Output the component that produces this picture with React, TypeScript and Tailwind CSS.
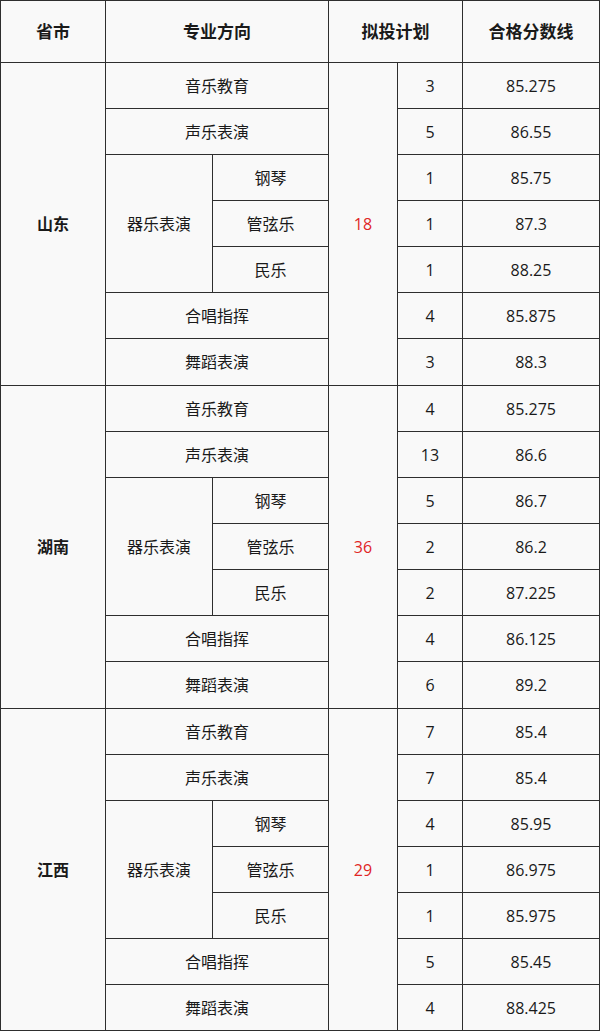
import React from "react";

type Block = {
  prov: string;
  plan: string;
  counts: string[];
  scores: string[];
};

const blocks: Block[] = [
  {
    prov: "山东",
    plan: "18",
    counts: ["3", "5", "1", "1", "1", "4", "3"],
    scores: ["85.275", "86.55", "85.75", "87.3", "88.25", "85.875", "88.3"],
  },
  {
    prov: "湖南",
    plan: "36",
    counts: ["4", "13", "5", "2", "2", "4", "6"],
    scores: ["85.275", "86.6", "86.7", "86.2", "87.225", "86.125", "89.2"],
  },
  {
    prov: "江西",
    plan: "29",
    counts: ["7", "7", "4", "1", "1", "5", "4"],
    scores: ["85.4", "85.4", "85.95", "86.975", "85.975", "85.45", "88.425"],
  },
];

const cell = "bg-[#f9f9f9] flex items-center justify-center";

function BlockCells({ b }: { b: Block }) {
  return (
    <>
      {/* row 1 */}
      <div className={`${cell} row-span-7 font-bold`}>{b.prov}</div>
      <div className={`${cell} col-span-2`}>音乐教育</div>
      <div className={`${cell} row-span-7 text-[#e02525]`}>{b.plan}</div>
      <div className={cell}>{b.counts[0]}</div>
      <div className={cell}>{b.scores[0]}</div>
      {/* row 2 */}
      <div className={`${cell} col-span-2`}>声乐表演</div>
      <div className={cell}>{b.counts[1]}</div>
      <div className={cell}>{b.scores[1]}</div>
      {/* row 3 */}
      <div className={`${cell} row-span-3`}>器乐表演</div>
      <div className={cell}>钢琴</div>
      <div className={cell}>{b.counts[2]}</div>
      <div className={cell}>{b.scores[2]}</div>
      {/* row 4 */}
      <div className={cell}>管弦乐</div>
      <div className={cell}>{b.counts[3]}</div>
      <div className={cell}>{b.scores[3]}</div>
      {/* row 5 */}
      <div className={cell}>民乐</div>
      <div className={cell}>{b.counts[4]}</div>
      <div className={cell}>{b.scores[4]}</div>
      {/* row 6 */}
      <div className={`${cell} col-span-2`}>合唱指挥</div>
      <div className={cell}>{b.counts[5]}</div>
      <div className={cell}>{b.scores[5]}</div>
      {/* row 7 */}
      <div className={`${cell} col-span-2`}>舞蹈表演</div>
      <div className={cell}>{b.counts[6]}</div>
      <div className={cell}>{b.scores[6]}</div>
    </>
  );
}

export default function App() {
  return (
    <div className="w-[600px] h-[1031px] bg-white">
      <div
        className="grid w-[600px] bg-[#2e2e2e] gap-px p-px text-[16px] text-[#1a1a1a] grid-cols-[104px_106px_115px_68px_64px_136px] grid-rows-[61px_45px_45px_45px_45px_45px_45px_46px_45px_45px_45px_45px_45px_45px_46px_45px_45px_45px_45px_45px_45px_45px]"
        style={{ fontFamily: '"Open Sans", "Noto Sans CJK SC", sans-serif' }}
      >
        <div className={`${cell} font-bold text-[17px]`}>省市</div>
        <div className={`${cell} col-span-2 font-bold text-[17px]`}>专业方向</div>
        <div className={`${cell} col-span-2 font-bold text-[17px]`}>拟投计划</div>
        <div className={`${cell} font-bold text-[17px]`}>合格分数线</div>
        {blocks.map((b) => (
          <BlockCells key={b.prov} b={b} />
        ))}
      </div>
    </div>
  );
}
